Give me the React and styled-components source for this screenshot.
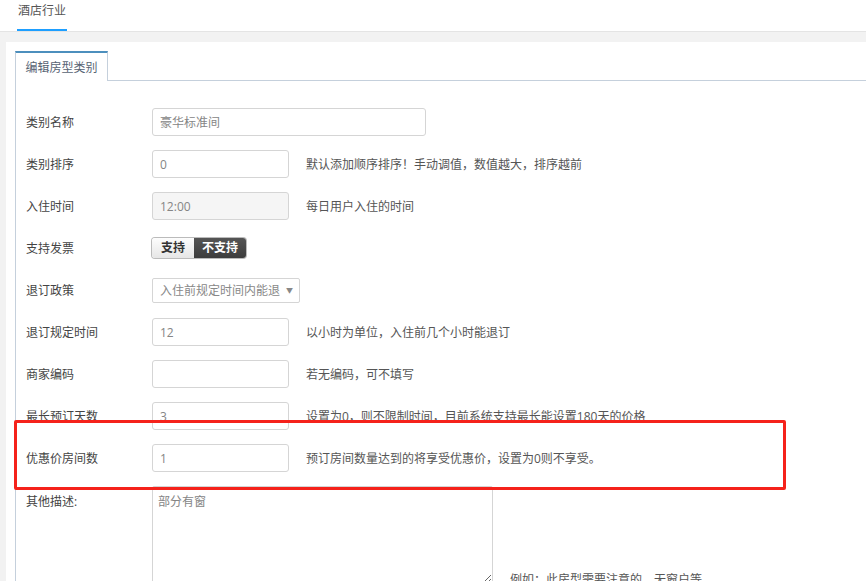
import styled, { createGlobalStyle } from 'styled-components';

const GlobalStyle = createGlobalStyle`
    html, body {
        margin: 0;
        padding: 0;
        background: #f2f2f2;
        overflow: hidden;
    }
    body {
        font-family: "Open Sans", "Noto Sans CJK SC", sans-serif;
        font-size: 12px;
        color: #444;
    }`

const Page = styled.div`
    width: 866px;
    height: 581px;
    position: relative;
    overflow: hidden;`

const TopBar = styled.div`
    height: 31px;
    background: #fff;
    border-bottom: 1px solid #e4e4e4;
    padding-left: 17px;
    display: flex;`

const TopTab = styled.div`
    height: 29px;
    line-height: 22px;
    padding: 0 1px;
    color: #555;
    border-bottom: 2px solid #1e9fff;`

const Panel = styled.div`
    margin: 10px 0 0 6px;
    background: #fff;
    padding: 9px 0 0 9px;
    height: 600px;`

const TabBar = styled.div`
    display: flex;
    border-bottom: 1px solid #c5d0dc;
    height: 29px;`

const Tab = styled.div`
    width: 91px;
    height: 28px;
    line-height: 30px;
    text-align: center;
    color: #576373;
    background: #fff;
    border: 1px solid #c5d0dc;
    border-top: 2px solid #4c8fbd;
    border-bottom: 0;
    margin-bottom: -1px;`

const TabContent = styled.div`
    border-left: 1px solid #c5d0dc;
    padding: 27px 0 0 10px;
    height: 560px;
    display: flex;
    flex-direction: column;
    gap: 14px;`

const Row = styled.div`
    display: flex;
    align-items: ${p => p.$top ? 'flex-end' : 'center'};
    min-height: 28px;`

const Label = styled.div`
    width: 126px;
    flex-shrink: 0;
    color: #444;
    align-self: ${p => p.$top ? 'flex-start' : 'center'};
    padding-top: ${p => p.$top ? '6px' : '0'};`

const Input = styled.input`
    box-sizing: border-box;
    width: ${p => p.$wide ? '274px' : '137px'};
    height: 28px;
    border: 1px solid #d5d5d5;
    border-radius: 3px;
    padding: 0 7px;
    font-family: "Open Sans", "Noto Sans CJK SC", sans-serif;
    font-size: 12px;
    color: #858585;
    background: ${p => p.disabled ? '#f5f5f5' : '#fff'};
    outline: 0;`

const Help = styled.span`
    margin-left: 17px;
    color: #555;
    margin-bottom: ${p => p.$bottom ? '-4px' : '0'};`

const Switch = styled.div`
    display: flex;
    height: 20px;
    border-radius: 3px;
    overflow: hidden;
    box-shadow: 0 0 0 1px #bbb;`

const SwitchOption = styled.div`
    padding: 0 ${p => p.$on ? '8px' : '9px'};
    line-height: 20px;
    font-weight: bold;
    font-size: 12px;
    color: ${p => p.$on ? '#fff' : '#333'};
    background: ${p => p.$on
        ? 'linear-gradient(#555, #3d3d3d)'
        : 'linear-gradient(#fdfdfd, #e6e6e6)'};`

const Select = styled.div`
    box-sizing: border-box;
    width: 148px;
    height: 25px;
    border: 1px solid #d5d5d5;
    border-radius: 2px;
    padding: 0 0 0 7px;
    display: flex;
    align-items: center;
    justify-content: space-between;
    color: #888;`

const Arrow = styled.span`
    font-size: 7px;
    color: #888;
    margin-right: 6px;`

const TextArea = styled.textarea`
    box-sizing: border-box;
    width: 341px;
    height: 98px;
    border: 1px solid #d5d5d5;
    border-radius: 2px;
    padding: 5px 5px;
    font-family: "Open Sans", "Noto Sans CJK SC", sans-serif;
    font-size: 12px;
    color: #858585;
    resize: both;
    outline: 0;`

const Highlight = styled.div`
    position: absolute;
    left: 14px;
    top: 420px;
    width: 766px;
    height: 64px;
    border: 3px solid #f5221b;
    border-radius: 2px;
    pointer-events: none;`

const fields = [
    { label: '类别排序', value: '0', help: '默认添加顺序排序！手动调值，数值越大，排序越前' },
    { label: '入住时间', value: '12:00', help: '每日用户入住的时间', disabled: true },
];

const moreFields = [
    { label: '退订规定时间', value: '12', help: '以小时为单位，入住前几个小时能退订' },
    { label: '商家编码', value: '', help: '若无编码，可不填写' },
    { label: '最长预订天数', value: '3', help: '设置为0，则不限制时间，目前系统支持最长能设置180天的价格' },
    { label: '优惠价房间数', value: '1', help: '预订房间数量达到的将享受优惠价，设置为0则不享受。' },
];

function Field({ label, value, help, disabled }) {
    return (
        <Row>
            <Label>{label}</Label>
            <Input disabled={disabled} defaultValue={value} />
            <Help>{help}</Help>
        </Row>
    );
}

function App() {
    return (
        <Page>
            <GlobalStyle />
            <TopBar>
                <TopTab>酒店行业</TopTab>
            </TopBar>
            <Panel>
                <TabBar>
                    <Tab>编辑房型类别</Tab>
                </TabBar>
                <TabContent>
                    <Row>
                        <Label>类别名称</Label>
                        <Input $wide defaultValue="豪华标准间" />
                    </Row>
                    {fields.map(f => <Field key={f.label} {...f} />)}
                    <Row>
                        <Label>支持发票</Label>
                        <Switch>
                            <SwitchOption>支持</SwitchOption>
                            <SwitchOption $on>不支持</SwitchOption>
                        </Switch>
                    </Row>
                    <Row>
                        <Label>退订政策</Label>
                        <Select>
                            入住前规定时间内能退
                            <Arrow>▼</Arrow>
                        </Select>
                    </Row>
                    {moreFields.map(f => <Field key={f.label} {...f} />)}
                    <Row $top>
                        <Label $top>其他描述:</Label>
                        <TextArea defaultValue="部分有窗" />
                        <Help $bottom>例如：此房型需要注意的，无窗户等</Help>
                    </Row>
                </TabContent>
            </Panel>
            <Highlight />
        </Page>
    );
}

export default App;
